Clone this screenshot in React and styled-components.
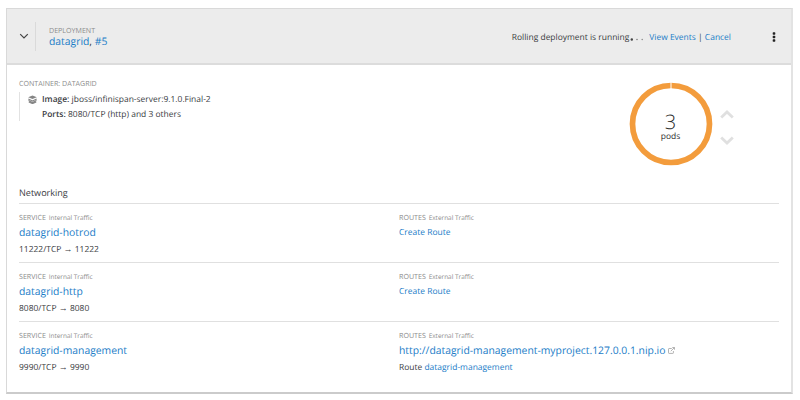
import React from "react";
import styled, { createGlobalStyle } from "styled-components";

const GlobalStyle = createGlobalStyle`
  * { box-sizing: border-box; }
  body {
    margin: 0;
    background: #fff;
    color: #3a3c3f;
    font-family: "Open Sans", sans-serif;
    font-size: 8.46px;
    line-height: 15px;
    text-rendering: geometricPrecision;
  }
`;

const Page = styled.main`
  width: 800px;
  height: 400px;
  padding: 8px 7px 6px 6px;
  overflow: hidden;
`;

const Panel = styled.section`
  height: 386px;
  border: 1px solid #d9d9d9;
  border-right: 2px solid #e3e3e3;
  border-bottom: 2px solid #cbcbcb;
  background: #fff;
`;

const Header = styled.header`
  display: flex;
  height: 56px;
  padding: 13px 15px 0 11px;
  background: #ececec;
  border-bottom: 2px solid #dcdcdc;
`;

const Toggle = styled.div`
  width: 18px;
  height: 29px;
  padding-top: 11px;
  border-right: 1px solid #dadada;
  svg { display: block; margin-left: 1px; }
`;

const Heading = styled.div`
  flex: 1;
  padding: 4px 0 0 13px;
`;

const Label = styled.div`
  height: ${(p) => p.$height || 10}px;
  color: #8c8c8c;
  font-size: 7.1px;
  line-height: ${(p) => p.$height || 10}px;
  white-space: nowrap;
`;

const Small = styled.span`
  margin-left: 1px;
  font-size: 6.45px;
`;

const Link = styled.a`
  color: #1a7cc7;
  text-decoration: none;
  font-size: ${(p) => (p.$large ? "10.36px" : "inherit")};
`;

const Title = styled.div`
  font-size: 10.3px;
  line-height: 12px;
`;

const Status = styled.div`
  display: flex;
  height: 31px;
  align-items: center;
  white-space: pre;
`;

const Dots = styled.svg`
  margin: 3px 5px 0 1px;
`;

const Kebab = styled.svg`
  margin: 10px 0 0 41px;
`;

const Body = styled.div`
  padding: 0 12px;
`;

const Overview = styled.div`
  display: flex;
  justify-content: space-between;
  height: 120px;
  padding-top: 14px;
`;

const Container = styled.div`
  display: flex;
  height: 29px;
  margin-top: 3px;
  border-left: 1px solid #e2e2e2;
  padding-left: 8px;
  svg { margin: 3px 5px 0 0; }
`;

const Strong = styled.span`
  font-weight: 600;
`;

const Pods = styled.div`
  display: flex;
  margin: 3px 45.5px 0 0;
`;

const Donut = styled.div`
  display: grid;
  width: 84px;
  height: 84px;
  > * { grid-area: 1 / 1; }
`;

const PodText = styled.div`
  padding-top: 26px;
  text-align: center;
  line-height: 12px;
  color: #2d2d2d;
`;

const PodCount = styled.div`
  height: 23px;
  font-size: 20px;
  font-weight: 300;
  line-height: 27px;
`;

const Scaling = styled.div`
  display: flex;
  flex-direction: column;
  gap: 17px;
  padding: 28px 0 0 7px;
`;

const NetworkTitle = styled.h2`
  height: 18px;
  margin: 0;
  font-size: 9.05px;
  font-weight: 400;
  line-height: 15px;
`;

const NetworkRow = styled.div`
  display: grid;
  grid-template-columns: 380px 1fr;
  height: 59px;
  padding-top: 7px;
  border-top: 1px solid #e0e0e0;
`;

const NameLine = styled.div`
  height: 17px;
  line-height: ${(p) => (p.$large ? 19 : 17)}px;
  white-space: nowrap;
`;

const Detail = styled.div`
  line-height: 17px;
  white-space: nowrap;
`;

const Arrow = styled.span`
  font-family: "Liberation Sans", sans-serif;
  font-size: 9px;
  line-height: 10px;
`;

const services = [
  { name: "datagrid-hotrod", port: "11222" },
  { name: "datagrid-http", port: "8080" },
  { name: "datagrid-management", port: "9990", url: "http://datagrid-management-myproject.127.0.0.1.nip.io" },
];

function Layers() {
  return (
    <svg width="9" height="9" viewBox="0 0 9 9">
      <path d="M.2 2.2 4.5.4l4.3 1.8-4.3 1.9z" fill="#858585" />
      <path d="M.3 4 4.5 5.9 8.7 4M.5 5.6l4 1.8 4-1.8M.8 7l3.7 1.6L8.2 7" fill="none" stroke="#858585" strokeWidth="1.1" />
    </svg>
  );
}

function Chevron({ down }) {
  return (
    <svg width="14" height="9" viewBox="0 0 14 9">
      <path d={down ? "M1.2 1.5 7 7l5.8-5.5" : "M1.2 7.5 7 2l5.8 5.5"} fill="none" stroke="#e0e0e0" strokeWidth="2.8" />
    </svg>
  );
}

function ExternalIcon() {
  return (
    <svg width="7" height="7" viewBox="0 0 7 7" fill="none" stroke="#a0a0a0" strokeWidth=".8">
      <path d="M3.8 1.5H1.1Q.5 1.5.5 2.1v3.7q0 .6.6.6h3.7q.6 0 .6-.6V4M2.8 4.2 6.3.7M4.3.5h2.2v2.2" />
    </svg>
  );
}

function Service({ name, port, url }) {
  return (
    <NetworkRow>
      <div>
        <Label $height={13}>SERVICE <Small>Internal Traffic</Small></Label>
        <NameLine $large><Link $large>{name}</Link></NameLine>
        <Detail>{port}/TCP <Arrow>→</Arrow> {port}</Detail>
      </div>
      <div>
        <Label $height={13}>ROUTES <Small>External Traffic</Small></Label>
        <NameLine $large={Boolean(url)}>
          {url ? <><Link $large>{url}</Link> <ExternalIcon /></> : <Link>Create Route</Link>}
        </NameLine>
        {url && <Detail>Route <Link>{name}</Link></Detail>}
      </div>
    </NetworkRow>
  );
}

export default function App() {
  return (
    <Page>
      <GlobalStyle />
      <Panel>
        <Header>
          <Toggle>
            <svg width="10" height="7" viewBox="0 0 10 7">
              <path d="M1.2 1.2 5 5l3.8-3.8" fill="none" stroke="#444" strokeWidth="1.2" />
            </svg>
          </Toggle>
          <Heading>
            <Label>DEPLOYMENT</Label>
            <Title><Link $large>datagrid</Link>, <Link $large>#5</Link></Title>
          </Heading>
          <Status>
            <span>Rolling deployment is running</span>
            <Dots width="14" height="3" viewBox="0 0 14 3">
              <circle cx="1.8" cy="1.5" r="1.2" fill="#444" />
              <circle cx="7" cy="1.5" r=".75" fill="#777" />
              <circle cx="12.2" cy="1.5" r=".75" fill="#888" />
            </Dots>
            <Link>View Events</Link><span> | </span><Link>Cancel</Link>
          </Status>
          <Kebab width="4" height="10" viewBox="0 0 4 10" fill="#222">
            <rect x=".7" y=".3" width="2.6" height="2.4" rx=".6" />
            <rect x=".7" y="3.8" width="2.6" height="2.4" rx=".6" />
            <rect x=".7" y="7.3" width="2.6" height="2.4" rx=".6" />
          </Kebab>
        </Header>
        <Body>
          <Overview>
            <div>
              <Label>CONTAINER: DATAGRID</Label>
              <Container>
                <Layers />
                <div>
                  <div><Strong>Image:</Strong> jboss/infinispan-server:9.1.0.Final-2</div>
                  <div><Strong>Ports:</Strong> 8080/TCP (http) and 3 others</div>
                </div>
              </Container>
            </div>
            <Pods>
              <Donut>
                <svg width="84" height="84" viewBox="0 0 84 84">
                  <circle cx="42" cy="42" r="38.5" fill="none" stroke="#f39c3c" strokeWidth="5.7" />
                  <path d="M42 0v7" stroke="#fff" strokeWidth="1" />
                </svg>
                <PodText><PodCount>3</PodCount>pods</PodText>
              </Donut>
              <Scaling><Chevron /><Chevron down /></Scaling>
            </Pods>
          </Overview>
          <NetworkTitle>Networking</NetworkTitle>
          {services.map((service) => <Service key={service.name} {...service} />)}
        </Body>
      </Panel>
    </Page>
  );
}
